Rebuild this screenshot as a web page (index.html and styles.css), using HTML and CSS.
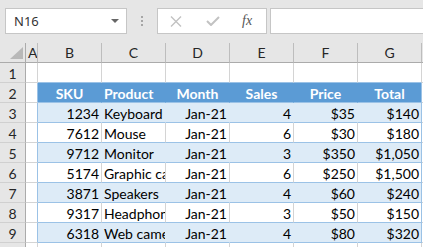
FILE: index.html
```html
<html>
<head>
  <link rel="stylesheet" href="styles.css">
</head>
<body>
  <div class="barra">
    <div class="nome">
      <span>N16</span>
      <span class="seta"></span>
    </div>
    <div class="pontos"><i></i><i></i><i></i></div>
    <div class="botoes">
      <svg class="x" width="12" height="11" viewBox="0 0 12 11"><path d="M1 0.5 L11 10.5 M11 0.5 L1 10.5" stroke="#c2c2c2" stroke-width="1.4" fill="none"/></svg>
      <svg class="ok" width="14" height="10" viewBox="0 0 14 10"><path d="M1 5 L5 9 L13 1" stroke="#c2c2c2" stroke-width="2" fill="none"/></svg>
      <span class="fx">fx</span>
    </div>
    <div class="formula"></div>
  </div>

  <div class="planilha">
    <!-- cabeçalho das colunas -->
    <div class="c canto"><span class="tri"></span></div>
    <div class="c hd">A</div>
    <div class="c hd">B</div>
    <div class="c hd">C</div>
    <div class="c hd">D</div>
    <div class="c hd">E</div>
    <div class="c hd">F</div>
    <div class="c hd">G</div>
    <div class="c hd"></div>

    <!-- linha 1 -->
    <div class="c rh">1</div>
    <div class="c"></div>
    <div class="c topo"></div>
    <div class="c topo"></div>
    <div class="c topo"></div>
    <div class="c topo"></div>
    <div class="c topo"></div>
    <div class="c topo"></div>
    <div class="c"></div>

    <!-- linha 2: cabeçalho da tabela -->
    <div class="c rh">2</div>
    <div class="c borda"></div>
    <div class="c th centro">SKU</div>
    <div class="c th">Product</div>
    <div class="c th centro">Month</div>
    <div class="c th centro">Sales</div>
    <div class="c th centro">Price</div>
    <div class="c th centro fim">Total</div>
    <div class="c"></div>

    <div class="c rh">3</div>
    <div class="c borda"></div>
    <div class="c faixa dir">1234</div>
    <div class="c faixa">Keyboard</div>
    <div class="c faixa dir">Jan-21</div>
    <div class="c faixa dir">4</div>
    <div class="c faixa dir">$35</div>
    <div class="c faixa dir fim">$140</div>
    <div class="c"></div>

    <div class="c rh">4</div>
    <div class="c borda"></div>
    <div class="c branca dir">7612</div>
    <div class="c branca">Mouse</div>
    <div class="c branca dir">Jan-21</div>
    <div class="c branca dir">6</div>
    <div class="c branca dir">$30</div>
    <div class="c branca dir fim">$180</div>
    <div class="c"></div>

    <div class="c rh">5</div>
    <div class="c borda"></div>
    <div class="c faixa dir">9712</div>
    <div class="c faixa">Monitor</div>
    <div class="c faixa dir">Jan-21</div>
    <div class="c faixa dir">3</div>
    <div class="c faixa dir">$350</div>
    <div class="c faixa dir fim">$1,050</div>
    <div class="c"></div>

    <div class="c rh">6</div>
    <div class="c borda"></div>
    <div class="c branca dir">5174</div>
    <div class="c branca">Graphic card</div>
    <div class="c branca dir">Jan-21</div>
    <div class="c branca dir">6</div>
    <div class="c branca dir">$250</div>
    <div class="c branca dir fim">$1,500</div>
    <div class="c"></div>

    <div class="c rh">7</div>
    <div class="c borda"></div>
    <div class="c faixa dir">3871</div>
    <div class="c faixa">Speakers</div>
    <div class="c faixa dir">Jan-21</div>
    <div class="c faixa dir">4</div>
    <div class="c faixa dir">$60</div>
    <div class="c faixa dir fim">$240</div>
    <div class="c"></div>

    <div class="c rh">8</div>
    <div class="c borda"></div>
    <div class="c branca dir">9317</div>
    <div class="c branca">Headphones</div>
    <div class="c branca dir">Jan-21</div>
    <div class="c branca dir">3</div>
    <div class="c branca dir">$50</div>
    <div class="c branca dir fim">$150</div>
    <div class="c"></div>

    <div class="c rh">9</div>
    <div class="c borda"></div>
    <div class="c faixa dir">6318</div>
    <div class="c faixa">Web camera</div>
    <div class="c faixa dir">Jan-21</div>
    <div class="c faixa dir">4</div>
    <div class="c faixa dir">$80</div>
    <div class="c faixa dir fim">$320</div>
    <div class="c"></div>

    <div class="c rh">10</div>
    <div class="c"></div>
    <div class="c"></div>
    <div class="c"></div>
    <div class="c"></div>
    <div class="c"></div>
    <div class="c"></div>
    <div class="c"></div>
    <div class="c"></div>
  </div>
</body>
</html>
```

FILE: styles.css
```css
* {
    box-sizing: border-box;
    margin: 0;
    padding: 0;
}

body {
    width: 423px;
    height: 247px;
    overflow: hidden;
    background-color: white;
}

.barra {
    display: flex;
    align-items: flex-start;
    height: 43px;
    padding-top: 8px;
    background-color: #e6e6e6;
}

.nome {
    display: flex;
    align-items: center;
    justify-content: space-between;
    width: 122px;
    height: 26px;
    margin-left: 5px;
    padding: 0 7px 0 8px;
    border: 1px solid #c6c6c6;
    background-color: white;
    font-family: "Noto Sans", sans-serif;
    font-size: 13px;
    color: #333;
}

.seta {
    width: 0;
    height: 0;
    border-left: 4px solid transparent;
    border-right: 4px solid transparent;
    border-top: 4px solid #666;
}

.pontos {
    display: flex;
    flex-direction: column;
    gap: 2px;
    margin: 8px 0 0 14px;
}

.pontos i {
    width: 2px;
    height: 2px;
    background-color: #a6a6a6;
}

.botoes {
    display: flex;
    align-items: center;
    width: 110px;
    height: 26px;
    margin-left: 14px;
    padding-left: 12px;
    border: 1px solid #c6c6c6;
    background-color: white;
}

.ok {
    margin-left: 24px;
}

.fx {
    margin-left: 22px;
    font-family: "Liberation Serif", serif;
    font-style: italic;
    font-size: 14px;
    color: #555;
}

.formula {
    flex: 1;
    height: 26px;
    margin-left: 3px;
    border: 1px solid #c6c6c6;
    border-right: 0;
    background-color: white;
}

.planilha {
    display: grid;
    grid-template-columns: 26px 12px repeat(6, 64px) 1fr;
    grid-auto-rows: 20px;
    font-family: Lato, sans-serif;
    font-size: 14px;
    color: black;
}

.c {
    padding: 3px 2px 0;
    line-height: 16px;
    white-space: nowrap;
    overflow: hidden;
    border-right: 1px solid #d4d4d4;
    border-bottom: 1px solid #d4d4d4;
}

.hd {
    padding-top: 2px;
    text-align: center;
    background-color: #e6e6e6;
    border-right: 1px solid #bdbdbd;
    border-bottom: 1px solid #ababab;
    color: #262626;
}

.canto {
    position: relative;
    background-color: #e6e6e6;
    border-right: 1px solid #ababab;
    border-bottom: 1px solid #ababab;
}

.tri {
    position: absolute;
    right: 2px;
    bottom: 3px;
    width: 0;
    height: 0;
    border-left: 13px solid transparent;
    border-bottom: 12px solid #b8b8b8;
}

.rh {
    text-align: center;
    background-color: #e6e6e6;
    border-right: 1px solid #ababab;
    border-bottom: 1px solid #d0d0d0;
    color: #262626;
}

.topo {
    border-bottom-color: #9bc2e6;
}

.borda {
    border-right-color: #9bc2e6;
}

.th {
    font-weight: bold;
    color: white;
    background-color: #5b9bd5;
    border-right-color: #5b9bd5;
    border-bottom-color: #9bc2e6;
}

.faixa {
    background-color: #ddebf7;
    border-right-color: #ddebf7;
    border-bottom-color: #9bc2e6;
}

.branca {
    border-bottom-color: #9bc2e6;
}

.fim {
    border-right-color: #9bc2e6;
}

.dir {
    text-align: right;
}

.centro {
    text-align: center;
}
```
